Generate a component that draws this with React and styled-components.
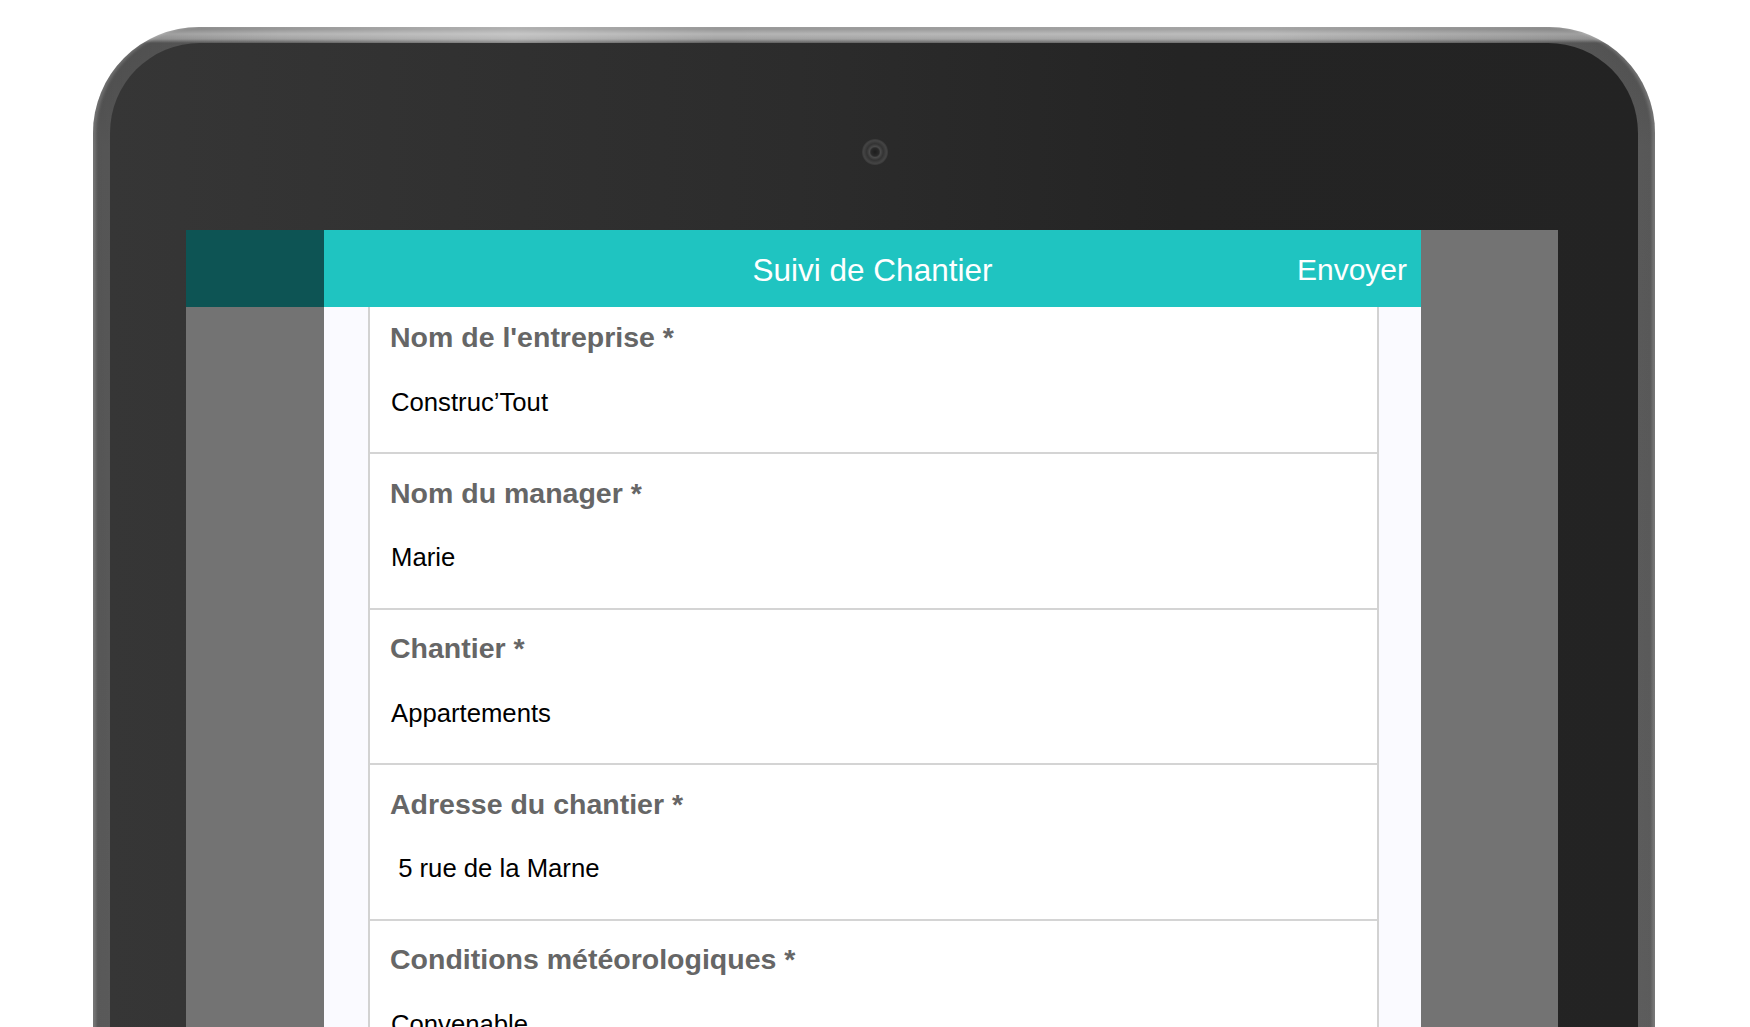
import React from 'react';
import styled, { createGlobalStyle } from 'styled-components';

const GlobalStyle = createGlobalStyle`
    html, body {
        margin: 0;
        padding: 0;
        background: #ffffff;
        overflow: hidden;
    }

    body {
        font-family: "Liberation Sans", Arial, sans-serif;
    }
`;

const Page = styled.div`
    height: 1027px;
    overflow: hidden;
    box-sizing: border-box;
    padding: 27px 0 0 93px;
`;

const Frame = styled.div`
    width: 1562px;
    height: 1120px;
    box-sizing: border-box;
    padding: 16px 17px 0 17px;
    border-radius: 106px 106px 0 0;
    background:
        linear-gradient(90deg, rgba(0, 0, 0, 0.18) 0%, rgba(255, 255, 255, 0) 12%, rgba(255, 255, 255, 0.25) 27%, rgba(255, 255, 255, 0) 40%, rgba(255, 255, 255, 0.12) 75%, rgba(0, 0, 0, 0.15) 100%),
        linear-gradient(180deg, #8a8a8a 0, #b4b4b4 7px, #a2a2a2 12px, #5c5c5c 16px, #666666 120px, #6c6c6c 100%);
    box-shadow: inset 3px 0 3px rgba(255, 255, 255, 0.18), inset -3px 0 3px rgba(255, 255, 255, 0.18);
`;

const Face = styled.div`
    height: 100%;
    box-sizing: border-box;
    border-radius: 90px 90px 0 0;
    background: linear-gradient(90deg, #363636 0%, #2c2c2c 45%, #242424 70%, #232323 100%);
    padding: 0 80px 0 76px;
    display: flex;
    flex-direction: column;
`;

const TopBezel = styled.div`
    height: 187px;
    flex-shrink: 0;
    display: flex;
    justify-content: center;
    align-items: flex-start;
    box-sizing: border-box;
    padding: 96px 0 0 6px;
`;

const Camera = styled.div`
    width: 26px;
    height: 26px;
    border-radius: 50%;
    background: radial-gradient(circle, #1d1d1d 0, #2a2a2a 22%, #4a4a4a 30%, #333 45%, #444 62%, #2c2c2c 80%, #262626 100%);
`;

const Screen = styled.div`
    flex: 1;
    display: grid;
    grid-template-columns: 138px 1097px 137px;
    grid-template-rows: 77px 1fr;
    overflow: hidden;
`;

const SideBlock = styled.div`
    background: ${(p) => p.color};
    grid-row: ${(p) => p.span ? 'span 2' : 'auto'};
`;

const Header = styled.div`
    background: #1fc4c1;
    display: grid;
    grid-template-columns: 1fr auto 1fr;
    align-items: center;
    box-sizing: border-box;
    padding-top: 3px;
    color: #ffffff;
`;

const Title = styled.div`
    grid-column: 2;
    margin-top: 2px;
    font-size: 31.5px;
    line-height: 1;
`;

const HeaderAction = styled.div`
    grid-column: 3;
    justify-self: end;
    margin-right: 14px;
    font-size: 30px;
    line-height: 1;
`;

const Content = styled.div`
    background: #fafaff;
    padding: 0 42px 0 44px;
    overflow: hidden;
`;

const Card = styled.div`
    background: #ffffff;
    border-left: 2px solid #d2d2d2;
    border-right: 2px solid #d2d2d2;
    display: flex;
    flex-direction: column;
    min-height: 100%;
`;

const Row = styled.div`
    border-bottom: 2px solid #d4d4d4;
    padding: ${(p) => p.first ? '16px' : '24.5px'} 20px 36.8px 20px;
`;

const Label = styled.div`
    font-size: 28.5px;
    line-height: 1;
    font-weight: 700;
    color: #666666;
`;

const Value = styled.div`
    margin-top: 38px;
    padding-left: 1px;
    font-size: 25.7px;
    line-height: 1;
    color: #000000;
    white-space: pre;
`;

const fields = [
    { label: "Nom de l'entreprise *", value: 'Construc\u2019Tout' },
    { label: 'Nom du manager *', value: 'Marie' },
    { label: 'Chantier *', value: 'Appartements' },
    { label: 'Adresse du chantier *', value: ' 5 rue de la Marne' },
    { label: 'Conditions météorologiques *', value: 'Convenable' },
];

const App = () => {
    return (
        <>
            <GlobalStyle />
            <Page>
                <Frame>
                    <Face>
                        <TopBezel>
                            <Camera />
                        </TopBezel>
                        <Screen>
                            <SideBlock color='#0d5454' />
                            <Header>
                                <Title>Suivi de Chantier</Title>
                                <HeaderAction>Envoyer</HeaderAction>
                            </Header>
                            <SideBlock color='#737373' span />
                            <SideBlock color='#737373' />
                            <Content>
                                <Card>
                                    {
                                        fields.map(({ label, value }, i) => (
                                            <Row key={label} first={i === 0}>
                                                <Label>{label}</Label>
                                                <Value>{value}</Value>
                                            </Row>
                                        ))
                                    }
                                </Card>
                            </Content>
                        </Screen>
                    </Face>
                </Frame>
            </Page>
        </>
    );
};

export default App;
